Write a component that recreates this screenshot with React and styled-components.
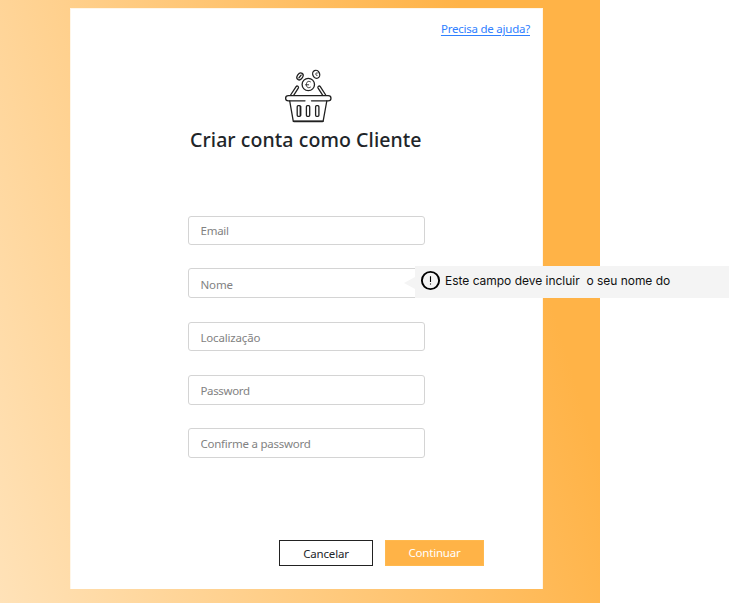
import React from "react";
import styled, { createGlobalStyle } from "styled-components";

const GlobalStyle = createGlobalStyle`
  * { box-sizing: border-box; }
  body {
    margin: 0;
    background: #fff;
    overflow: hidden;
    font-family: "Noto Sans", "Open Sans", sans-serif;
  }
`;

const Backdrop = styled.main`
  width: 600px;
  height: 603px;
  padding: 8px 57px 14px 70px;
  background: linear-gradient(73deg, #ffe2b8 0%, #ffb347 82%);
`;

const Card = styled.section`
  display: flex;
  flex-direction: column;
  height: 581px;
  background: #fff;
  border: 1px solid #fff6e8;
  border-width: 1px 1px 0 1px;
`;

const HelpLink = styled.a`
  align-self: flex-end;
  margin: 11px 12px 0 0;
  font-size: 11.5px;
  line-height: 18px;
  letter-spacing: -0.23px;
  color: #2f80ff;
  text-decoration: underline;
  text-underline-offset: 2px;
`;

const Basket = styled.svg`
  align-self: flex-start;
  flex: none;
  width: 50px;
  height: 58px;
  margin: 28px 0 0 212px;
`;

const Title = styled.h1`
  margin: 2px 0 0 119px;
  font-size: 19.5px;
  font-weight: 500;
  line-height: 28px;
  letter-spacing: 0.08px;
  white-space: nowrap;
  color: #212529;
`;

const Form = styled.form`
  display: flex;
  flex-direction: column;
  flex: 1;
`;

const Fields = styled.div`
  display: grid;
  grid-template-rows: 52px 54px 53px 53px 30px;
  width: 236.5px;
  margin: 62px 0 0 117px;
`;

const Field = styled.div`
  position: relative;
  height: ${(p) => p.$height}px;
`;

const Input = styled.input`
  display: block;
  width: 100%;
  height: 100%;
  padding: ${(p) => p.$top}px 12px 0 11.5px;
  border: 1px solid #d4d4d4;
  border-radius: 3px;
  background: #fff;
  outline: none;
  font: 11.5px "Noto Sans", "Open Sans", sans-serif;
  letter-spacing: ${(p) => p.$spacing}px;
  &::placeholder { color: #828282; opacity: 1; }
`;

const Hint = styled.div`
  position: absolute;
  left: 227px;
  top: -2px;
  display: flex;
  align-items: center;
  gap: 4px;
  width: 314px;
  height: 32px;
  padding: 0 0 3px 5px;
  background: #f4f4f4;
  color: #111;
  font: 12px Inter, sans-serif;
  letter-spacing: -0.02px;
  white-space: pre;
  &::before {
    content: "";
    position: absolute;
    left: -11px;
    top: 11px;
    border: solid transparent;
    border-width: 6px 11px 6px 0;
    border-right-color: #f4f4f4;
  }
`;

const AlertIcon = styled.svg`
  flex: none;
  width: 21px;
  height: 21px;
`;

const Actions = styled.div`
  display: flex;
  gap: 12px;
  margin: 82px 0 0 208px;
`;

const Button = styled.button`
  width: ${(p) => (p.$primary ? 99 : 94)}px;
  height: 25.5px;
  padding: ${(p) => (p.$primary ? "0 0 1px" : "1px 0 0")};
  border: 1px solid ${(p) => (p.$primary ? "#ffb94f" : "#222")};
  background: ${(p) => (p.$primary ? "#ffb347" : "#fff")};
  color: ${(p) => (p.$primary ? "#fff" : "#212529")};
  font: 11.5px "Noto Sans", "Open Sans", sans-serif;
  letter-spacing: -0.2px;
`;

function BasketLogo() {
  return (
    <Basket viewBox="283 66 50 58" fill="none" stroke="#202020" strokeWidth="1.3" strokeLinecap="round" strokeLinejoin="round">
      <circle cx="308.3" cy="84.5" r="6.2" />
      <path d="M310.4 81.8c-2.3-1.4-4 .2-4 2.8s1.8 4.1 4 2.6M305.5 84.8h3.2" strokeWidth="0.9" />
      <ellipse cx="300" cy="76.4" rx="2.7" ry="3.7" transform="rotate(35 300 76.4)" />
      <path d="m298.9 77.9 2.2-2.8" />
      <ellipse cx="316.2" cy="74.3" rx="3.4" ry="4.1" transform="rotate(-25 316.2 74.3)" />
      <path d="M317.3 72.9c-1.8-.7-2.4 2.5-.3 2.5" strokeWidth="1" />
      <path d="m290.6 95 5.5-8.3c1-1.5 3.1-.1 2.2 1.4l-4.5 7M325.7 95l-5.4-8.3c-1-1.5-3.1-.1-2.2 1.4l4.5 7" />
      <path d="M288.4 95.6h39.8c3.7 0 3.7 5.2 0 5.2H311.5M305 100.8h-16.6c-3.7 0-3.7-5.2 0-5.2" />
      <path d="m289.7 101 3.6 20.3h29.8l3.7-20.3" />
      <path d="M294 121.3h28.5" strokeWidth="1.8" />
      <rect x="297.2" y="105.7" width="3.3" height="10.6" rx="1" />
      <path d="M300.5 106.5v9" strokeWidth="1.6" />
      <rect x="306.4" y="105.7" width="3.3" height="10.6" rx="1" />
      <rect x="315.6" y="105.7" width="3.3" height="10.6" rx="1" />
    </Basket>
  );
}

function FieldHint() {
  return (
    <Hint role="tooltip">
      <AlertIcon viewBox="0 0 21 21" fill="none" stroke="#000">
        <circle cx="10.5" cy="10.5" r="8.6" strokeWidth="1.9" />
        <path d="M10.5 6.3v5.6M10.5 13.4v1.2" strokeWidth="1.1" />
      </AlertIcon>
      <span>{"Este campo deve incluir  o seu nome do"}</span>
    </Hint>
  );
}

const fields = [
  { label: "Email", spacing: -0.25, height: 29, top: 0 },
  { label: "Nome", spacing: -0.15, height: 30, top: 2, hint: true },
  { label: "Localização", spacing: -0.18, height: 29, top: 1 },
  { label: "Password", spacing: -0.35, height: 30, top: 1 },
  { label: "Confirme a password", spacing: -0.25, height: 30, top: 1 },
];

export default function App() {
  return (
    <>
      <GlobalStyle />
      <Backdrop>
        <Card>
          <HelpLink>Precisa de ajuda?</HelpLink>
          <BasketLogo />
          <Title>Criar conta como Cliente</Title>
          <Form>
            <Fields>
              {fields.map((f) => (
                <Field key={f.label} $height={f.height}>
                  <Input placeholder={f.label} $spacing={f.spacing} $top={f.top} />
                  {f.hint && <FieldHint />}
                </Field>
              ))}
            </Fields>
            <Actions>
              <Button type="button">Cancelar</Button>
              <Button type="button" $primary>Continuar</Button>
            </Actions>
          </Form>
        </Card>
      </Backdrop>
    </>
  );
}
